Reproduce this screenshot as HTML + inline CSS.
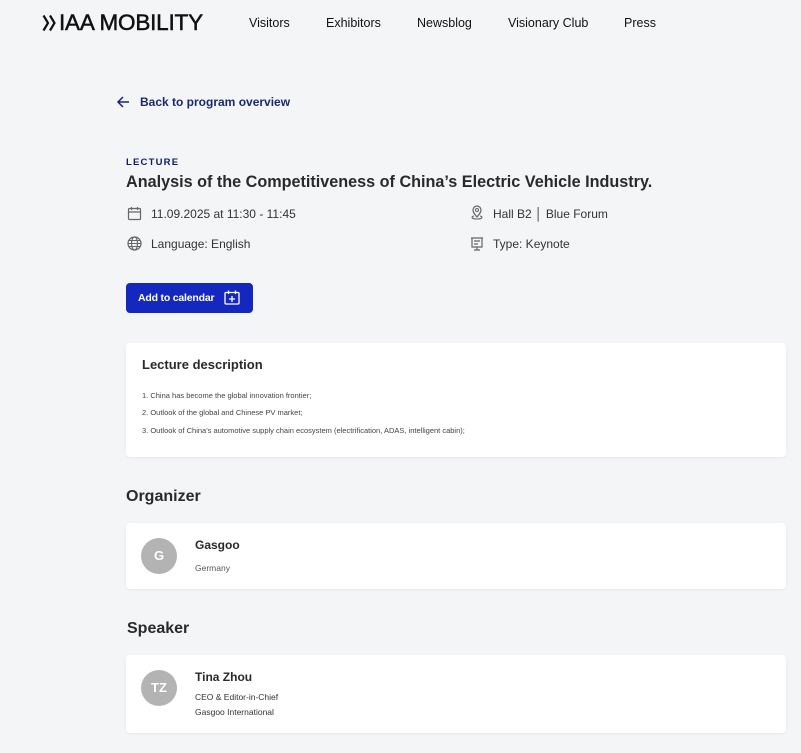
<!DOCTYPE html>
<html><head><meta charset="utf-8"><style>
*{margin:0;padding:0;box-sizing:border-box}
body{width:801px;height:753px;background:#f4f5f7;font-family:"Liberation Sans",Arial,sans-serif;color:#222;position:relative;overflow:hidden}
.a{position:absolute;white-space:nowrap}
.nav{font-size:12.5px;color:#111;top:16px}
.card{position:absolute;left:126px;width:660px;background:#fff;border-radius:4px;box-shadow:0 1px 3px rgba(0,0,0,.06)}
.av{position:absolute;left:15px;width:36px;height:36px;border-radius:50%;background:#b3b3b3;color:#fff;font-size:13px;font-weight:bold;text-align:center;line-height:36px}
.meta{font-size:12px;color:#333}
</style></head><body>
<svg class="a" style="left:42px;top:14px" width="15" height="18" viewBox="0 0 15 18"><path d="M1.5 1.5L6 9l-4.5 7.5M8 1.5L12.5 9 8 16.5" fill="none" stroke="#111" stroke-width="2.2"/></svg>
<div class="a" style="left:59px;top:10px;font-size:22.5px;color:#111;letter-spacing:-0.2px;-webkit-text-stroke:0.5px #111">IAA MOBILITY</div>
<div class="a nav" style="left:249px">Visitors</div>
<div class="a nav" style="left:326px">Exhibitors</div>
<div class="a nav" style="left:417px">Newsblog</div>
<div class="a nav" style="left:508px">Visionary Club</div>
<div class="a nav" style="left:624px">Press</div>

<svg class="a" style="left:116px;top:95px" width="14" height="14" viewBox="0 0 14 14"><path d="M13 7H2M7 2L2 7l5 5" fill="none" stroke="#1a237e" stroke-width="1.5"/></svg>
<div class="a" style="left:140px;top:95px;font-size:12px;font-weight:bold;color:#1a2a6e">Back to program overview</div>

<div class="a" style="left:126px;top:157px;font-size:9.5px;font-weight:bold;letter-spacing:1.2px;color:#0f1a6b">LECTURE</div>
<div class="a" style="left:126px;top:173px;font-size:16.2px;font-weight:bold;color:#2a2a2a">Analysis of the Competitiveness of China’s Electric Vehicle Industry.</div>

<svg class="a" style="left:127px;top:206px" width="15" height="15" viewBox="0 0 15 15"><rect x="1.5" y="2.5" width="12" height="11" rx="1" fill="none" stroke="#666" stroke-width="1.2"/><path d="M4.5 1v3M10.5 1v3M1.5 6h12" stroke="#666" stroke-width="1.2"/></svg>
<div class="a meta" style="left:151px;top:207px">11.09.2025 at 11:30 - 11:45</div>
<svg class="a" style="left:127px;top:236px" width="15" height="15" viewBox="0 0 15 15"><circle cx="7.5" cy="7.5" r="6.5" fill="none" stroke="#666" stroke-width="1.2"/><ellipse cx="7.5" cy="7.5" rx="3" ry="6.5" fill="none" stroke="#666" stroke-width="1.1"/><path d="M1 7.5h13M2 4.5h11M2 10.5h11" stroke="#666" stroke-width="1"/></svg>
<div class="a meta" style="left:151px;top:237px">Language: English</div>
<svg class="a" style="left:469px;top:205px" width="16" height="16" viewBox="0 0 16 16"><path d="M8 12C5 8.5 4 7 4 5a4 4 0 018 0c0 2-1 3.5-4 7z" fill="none" stroke="#666" stroke-width="1.2"/><circle cx="8" cy="5" r="1.5" fill="none" stroke="#666"/><path d="M5 11c-3 .5-3 3 3 3s6-2.5 3-3" fill="none" stroke="#666" stroke-width="1.1"/></svg>
<div class="a meta" style="left:493px;top:207px">Hall B2 │ Blue Forum</div>
<svg class="a" style="left:469px;top:236px" width="16" height="16" viewBox="0 0 16 16"><path d="M2 2h12M3 2v9h10V2M8 11v3M5 14h6M5 5h6M5 8h4" fill="none" stroke="#666" stroke-width="1.2"/></svg>
<div class="a meta" style="left:493px;top:237px">Type: Keynote</div>

<div class="a" style="left:126px;top:283px;width:127px;height:30px;background:#1428c0;border-radius:4px"></div>
<div class="a" style="left:138px;top:292px;font-size:10.5px;font-weight:bold;color:#fff;letter-spacing:-0.2px">Add to calendar</div>
<svg class="a" style="left:224px;top:290px" width="16" height="15" viewBox="0 0 16 15"><rect x="1" y="2.5" width="14" height="11.5" rx="1" fill="none" stroke="#fff" stroke-width="1.3"/><path d="M4.5 0.5v3.5M11.5 0.5v3.5M8 6v6M5 9h6" stroke="#fff" stroke-width="1.3"/></svg>

<div class="card" style="top:343px;height:114px">
<div class="a" style="left:16px;top:14px;font-size:13px;font-weight:bold;color:#2a2a2a">Lecture description</div>
<div class="a" style="left:16px;top:48px;font-size:7.5px;color:#444">1. China has become the global innovation frontier;</div>
<div class="a" style="left:16px;top:65px;font-size:7.5px;color:#444">2. Outlook of the global and Chinese PV market;</div>
<div class="a" style="left:16px;top:83px;font-size:7.5px;color:#444">3. Outlook of China's automotive supply chain ecosystem (electrification, ADAS, intelligent cabin);</div>
</div>

<div class="a" style="left:126px;top:488px;font-size:16px;font-weight:bold;color:#2a2a2a">Organizer</div>
<div class="card" style="top:523px;height:66px">
<div class="av" style="top:15px">G</div>
<div class="a" style="left:69px;top:15px;font-size:12px;font-weight:bold;color:#2a2a2a">Gasgoo</div>
<div class="a" style="left:69px;top:40px;font-size:8.5px;color:#555">Germany</div>
</div>

<div class="a" style="left:127px;top:620px;font-size:16px;font-weight:bold;color:#2a2a2a">Speaker</div>
<div class="card" style="top:655px;height:78px">
<div class="av" style="top:15px">TZ</div>
<div class="a" style="left:69px;top:15px;font-size:12px;font-weight:bold;color:#2a2a2a">Tina Zhou</div>
<div class="a" style="left:69px;top:37px;font-size:8.5px;color:#333">CEO &amp; Editor-in-Chief</div>
<div class="a" style="left:69px;top:52px;font-size:8.5px;color:#333">Gasgoo International</div>
</div>
</body></html>
